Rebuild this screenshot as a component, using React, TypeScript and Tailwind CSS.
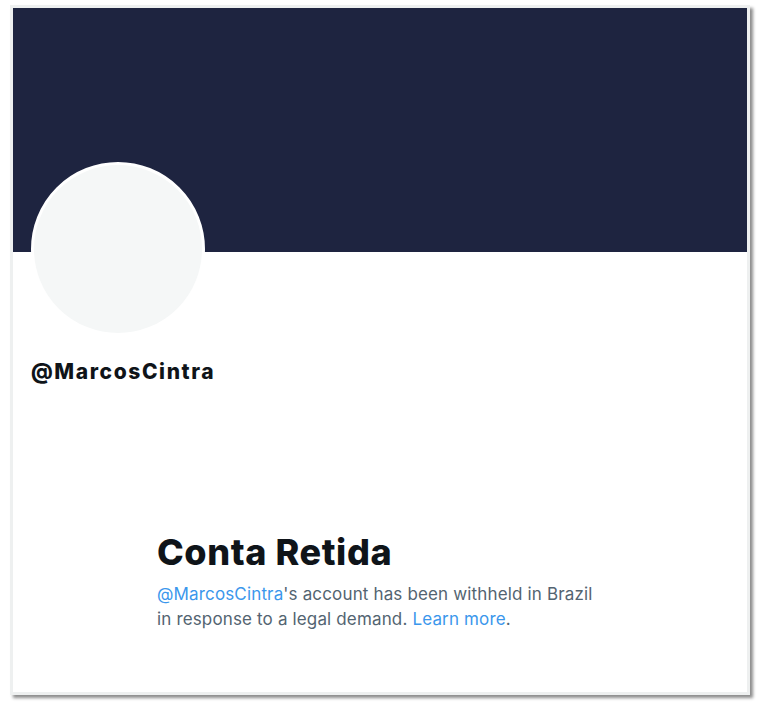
const App = () => {
  return <div className="w-[768px] h-[709px] bg-white pt-[5px] pl-[10px]" style={{
    fontFamily: "Inter, 'Liberation Sans', sans-serif"
  }}>
      <div className="w-[740px] h-[690px] border-[3px] border-[#eef0f0] shadow-[3px_3px_3px_rgba(0,0,0,0.45)] bg-white flex flex-col">
        {/* Banner */}
        <div className="h-[244px] bg-[#1e2440] shrink-0" />

        {/* Avatar + handle */}
        <div className="relative h-[160px] shrink-0">
          <div className="absolute left-[18px] top-[-90px] w-[174px] h-[174px] rounded-full bg-[#f5f7f7] border-[3px] border-white" />
          <div className="absolute left-[18px] top-[104px] text-[21px] font-extrabold text-[#0f1419] tracking-[1.6px]">
            @MarcosCintra
          </div>
        </div>

        {/* Withheld message */}
        <div className="pl-[144px] pt-[118px]">
          <h1 className="text-[36px] leading-[44px] font-extrabold text-[#0f1419] tracking-[0.6px]">
            Conta Retida
          </h1>
          <p className="mt-[8px] text-[17px] leading-[25px] text-[#536471] w-[445px] tracking-[0.15px]">
            <span className="text-[#3b97ec]">@MarcosCintra</span>'s account has been withheld in Brazil in response to a legal demand.{" "}
            <span className="text-[#3b97ec]">Learn more</span>.
          </p>
        </div>
      </div>
    </div>;
};

export default App;
